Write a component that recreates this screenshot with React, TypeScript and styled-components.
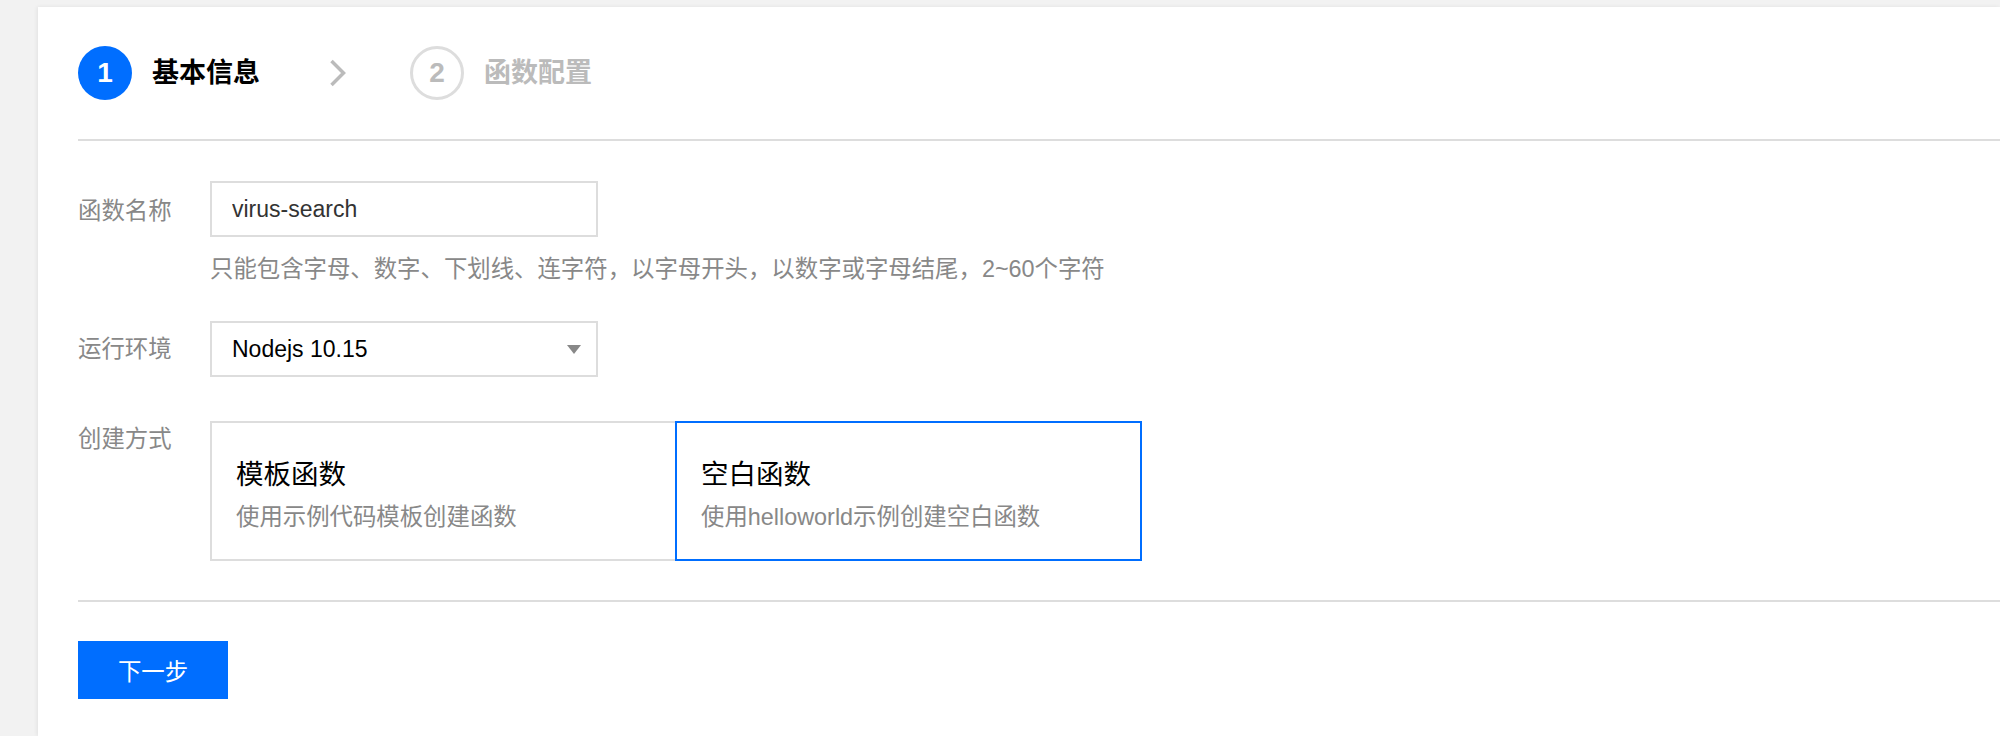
import React from "react";
import styled, { createGlobalStyle, css } from "styled-components";

const GlobalStyle = createGlobalStyle`
  html, body {
    margin: 0;
    padding: 0;
    background: #f2f2f2;
  }
  body {
    font-family: "Liberation Sans", "Noto Sans CJK SC", sans-serif;
    overflow: hidden;
  }
  * { box-sizing: border-box; }
`;

const Page = styled.div`
  display: flex;
  min-height: 736px;
  padding: 7px 0 0 38px;
`;

const Card = styled.main`
  flex: 1;
  background: #fff;
  padding-left: 40px;
  box-shadow: -1px 0 4px rgba(0, 0, 0, 0.07);
`;

const StepsBar = styled.div`
  display: flex;
  align-items: center;
  padding: 39px 0;
  border-bottom: 2px solid #ddd;
`;

const Step = styled.div`
  display: flex;
  align-items: center;
  gap: 20px;
`;

const StepCircle = styled.span<{ $active?: boolean }>`
  width: 54px;
  height: 54px;
  border-radius: 50%;
  display: flex;
  align-items: center;
  justify-content: center;
  font: bold 28px "Liberation Sans", sans-serif;
  ${(p) =>
    p.$active
      ? css`
          background: #006eff;
          color: #fff;
        `
      : css`
          background: #fff;
          color: #bbb;
          border: 3px solid #ddd;
        `}
`;

const StepLabel = styled.span<{ $active?: boolean }>`
  font-size: 27px;
  font-weight: bold;
  line-height: 40px;
  color: ${(p) => (p.$active ? "#000" : "#bbb")};
`;

const StepArrow = styled.span`
  display: flex;
  margin: 0 64px 0 69px;
`;

const FormSection = styled.section`
  padding: 40px 0 39px;
  border-bottom: 2px solid #ddd;
`;

const FormRow = styled.div<{ $gap?: number }>`
  display: grid;
  grid-template-columns: 132px auto;
  align-items: start;
  margin-bottom: ${(p) => p.$gap ?? 0}px;
`;

const Label = styled.label<{ $lh: number; $pt?: number }>`
  font-size: 23.4px;
  color: #888;
  line-height: ${(p) => p.$lh}px;
  padding-top: ${(p) => p.$pt ?? 0}px;
`;

const Field = styled.div`
  display: flex;
  flex-direction: column;
  align-items: flex-start;
`;

const TextInput = styled.input`
  width: 388px;
  height: 56px;
  border: 2px solid #ddd;
  padding: 0 20px;
  font: 23px "Liberation Sans", "Noto Sans CJK SC", sans-serif;
  color: #333;
  outline: none;
  background: #fff;
`;

const Help = styled.div`
  margin-top: 14px;
  font-size: 23.4px;
  line-height: 36px;
  color: #888;
  white-space: nowrap;
`;

const SelectBox = styled.div`
  width: 388px;
  height: 56px;
  border: 2px solid #ddd;
  padding: 0 15px 0 20px;
  display: flex;
  align-items: center;
  justify-content: space-between;
  font-size: 23px;
  color: #000;
  background: #fff;
`;

const OptionGroup = styled.div`
  display: flex;
`;

const OptionCard = styled.div<{ $selected?: boolean }>`
  width: 467px;
  height: 140px;
  padding: 32px 24px 0;
  border: 2px solid ${(p) => (p.$selected ? "#006eff" : "#ddd")};
  background: #fff;
  & + & {
    margin-left: -2px;
  }
  ${(p) =>
    p.$selected &&
    css`
      position: relative;
      z-index: 1;
    `}
`;

const OptionTitle = styled.div`
  font-size: 27.5px;
  line-height: 40px;
  color: #000;
`;

const OptionDesc = styled.div`
  margin-top: 4px;
  font-size: 23.4px;
  line-height: 36px;
  color: #888;
`;

const Footer = styled.div`
  padding-top: 39px;
`;

const PrimaryButton = styled.button`
  width: 150px;
  height: 58px;
  border: none;
  background: #006eff;
  color: #fff;
  font: 23.4px "Liberation Sans", "Noto Sans CJK SC", sans-serif;
  cursor: pointer;
`;

export default function App() {
  return (
    <>
      <GlobalStyle />
      <Page>
        <Card>
          <StepsBar>
            <Step>
              <StepCircle $active>1</StepCircle>
              <StepLabel $active>基本信息</StepLabel>
            </Step>
            <StepArrow>
              <svg width="17" height="28" viewBox="0 0 17 28">
                <polyline
                  points="2.5,2 14.5,14 2.5,26"
                  fill="none"
                  stroke="#bbb"
                  strokeWidth="3.5"
                />
              </svg>
            </StepArrow>
            <Step>
              <StepCircle>2</StepCircle>
              <StepLabel>函数配置</StepLabel>
            </Step>
          </StepsBar>

          <FormSection>
            <FormRow $gap={34}>
              <Label $lh={56} $pt={2}>函数名称</Label>
              <Field>
                <TextInput defaultValue="virus-search" readOnly />
                <Help>只能包含字母、数字、下划线、连字符，以字母开头，以数字或字母结尾，2~60个字符</Help>
              </Field>
            </FormRow>

            <FormRow $gap={44}>
              <Label $lh={56}>运行环境</Label>
              <Field>
                <SelectBox>
                  <span>Nodejs 10.15</span>
                  <svg width="14" height="9" viewBox="0 0 14 9">
                    <polygon points="0,0 14,0 7,9" fill="#888" />
                  </svg>
                </SelectBox>
              </Field>
            </FormRow>

            <FormRow>
              <Label $lh={36}>创建方式</Label>
              <OptionGroup>
                <OptionCard>
                  <OptionTitle>模板函数</OptionTitle>
                  <OptionDesc>使用示例代码模板创建函数</OptionDesc>
                </OptionCard>
                <OptionCard $selected>
                  <OptionTitle>空白函数</OptionTitle>
                  <OptionDesc>使用helloworld示例创建空白函数</OptionDesc>
                </OptionCard>
              </OptionGroup>
            </FormRow>
          </FormSection>

          <Footer>
            <PrimaryButton>下一步</PrimaryButton>
          </Footer>
        </Card>
      </Page>
    </>
  );
}
